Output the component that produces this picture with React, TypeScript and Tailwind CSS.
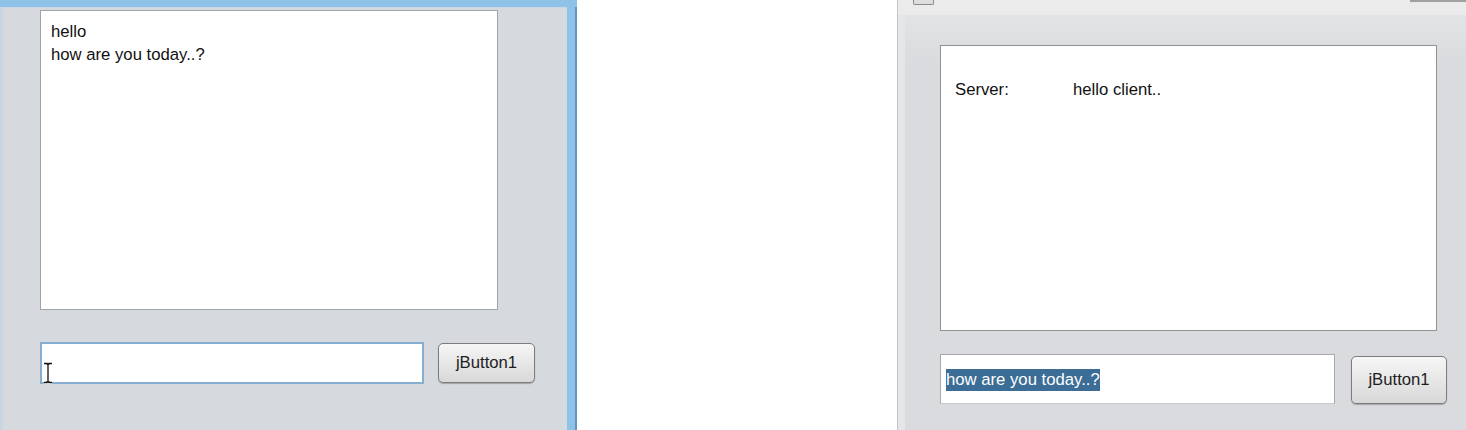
import React from "react";

const font = { fontFamily: '"Liberation Sans", Arial, sans-serif' };

function JButton({ w, h }: { w: string; h: string }) {
  return (
    <div
      className={`${w} ${h} flex items-center justify-center rounded-[5px] border border-[#7c7c7c] bg-gradient-to-b from-[#f6f6f6] to-[#d8d8d8] text-[16.7px] text-[#1e1e1e] shadow-[0_1px_1px_rgba(0,0,0,0.25)]`}
    >
      jButton1
    </div>
  );
}

export default function App() {
  return (
    <div
      className="flex h-[430px] w-[1466px] overflow-hidden bg-white"
      style={font}
    >
      {/* Left window */}
      <div className="flex h-full w-[577px] flex-col bg-[#8ec2e6]">
        <div className="h-[7px] w-full" />
        <div className="flex flex-1">
          <div className="flex w-[566px] flex-col border-l-[3px] border-t border-[#c9d6e2] bg-[#d6d9de] pl-[37px] pt-[2px]">
            <div className="h-[300px] w-[458px] border border-[#a2a3a6] bg-white pl-[10px] pt-[9px] text-[16.7px] leading-[23px] text-[#111]">
              <div>hello</div>
              <div>how are you today..?</div>
            </div>
            <div className="mt-[32px] flex items-start gap-[14px]">
              <div className="relative h-[42px] w-[384px] border-2 border-[#86aed0] bg-white">
                <svg
                  className="absolute left-[1px] top-[18px]"
                  width="10"
                  height="22"
                  viewBox="0 0 10 22"
                >
                  <path
                    d="M1 1.5h3v0.5h2v-0.5h3M5 2v18M1 20.5h3v-0.5h2v0.5h3"
                    stroke="#fff"
                    strokeWidth="3"
                    fill="none"
                  />
                  <path
                    d="M1 1.5h3v0.5h2v-0.5h3M5 2v18M1 20.5h3v-0.5h2v0.5h3"
                    stroke="#111"
                    strokeWidth="1.3"
                    fill="none"
                  />
                </svg>
              </div>
              <div className="mt-px">
                <JButton w="w-[97px]" h="h-[40px]" />
              </div>
            </div>
          </div>
          <div className="w-px bg-[#c5dcee]" />
          <div className="flex-1 border-r-2 border-[#5f95bf] bg-[#8ec2e6]" />
        </div>
      </div>

      {/* Gap */}
      <div className="w-[320px] bg-white" />

      {/* Right window */}
      <div className="flex h-full flex-1 flex-col border-l border-[#c4c4c4]">
        <div className="flex h-[15px] items-start bg-[#ebebeb] pl-[15px]">
          <div className="h-[5px] w-[21px] rounded-b-[2px] border-x border-b border-[#8a8a8a] bg-[#dedede]" />
          <div className="flex-1" />
          <div className="h-[2px] w-[56px] bg-[#a0a0a0]" />
        </div>
        <div className="flex flex-1 flex-col border-l-[7px] border-[#e5e6e8] bg-gradient-to-b from-[#e2e3e5] to-[#dadbde] to-[12%] pl-[35px] pt-[30px]">
          <div className="flex h-[286px] w-[497px] items-start border border-[#909193] bg-white pl-[14px] pt-[32px] text-[16.7px] leading-[23px] text-[#111]">
            <div className="w-[118px] shrink-0">Server:</div>
            <div>hello client..</div>
          </div>
          <div className="mt-[23px] flex items-start gap-[16px]">
            <div className="flex h-[50px] w-[395px] items-center border border-[#a9aaac] border-b-[#c9cacc] bg-white pl-[5px] pt-px">
              <span className="bg-[#3b6d96] text-[16.7px] leading-[22px] text-white">
                how are you today..?
              </span>
            </div>
            <div className="mt-[2px]">
              <JButton w="w-[96px]" h="h-[48px]" />
            </div>
          </div>
        </div>
      </div>
    </div>
  );
}
